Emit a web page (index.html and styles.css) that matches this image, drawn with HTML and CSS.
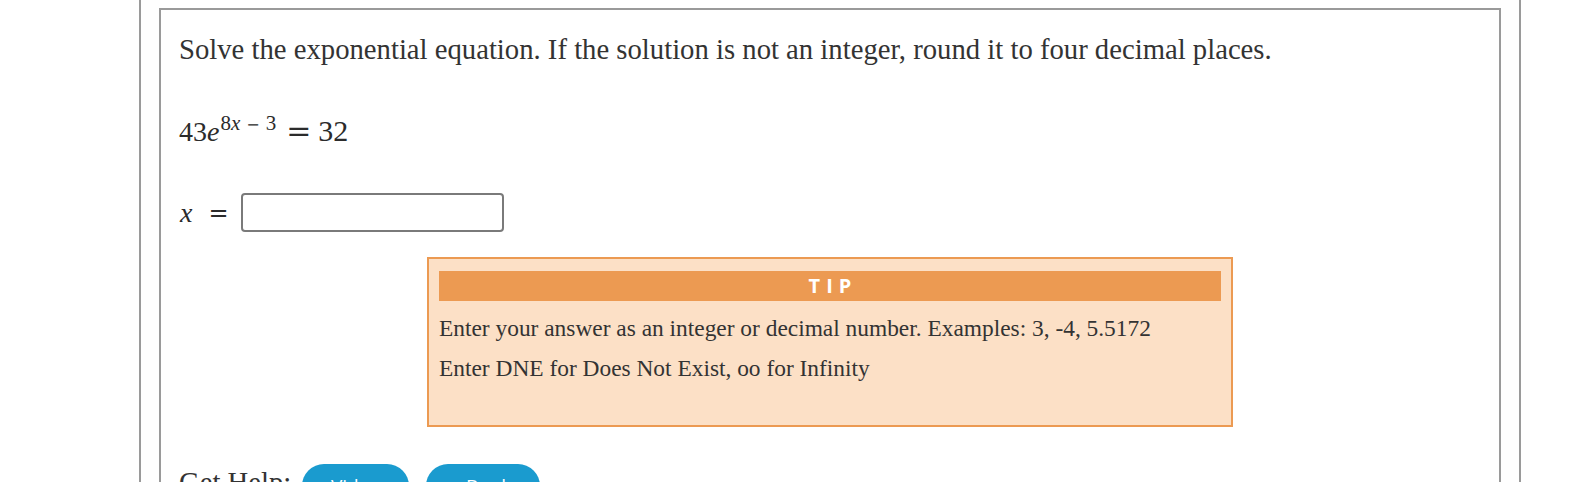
FILE: index.html
```html
<!DOCTYPE html>
<html>
<head>
<meta charset="utf-8">
<link rel="stylesheet" href="styles.css">
</head>
<body>
<div class="outer">
  <div class="question">
    <p class="prompt">Solve the exponential equation. If the solution is not an integer, round it to four decimal places.</p>
    <div class="equation"><span class="num">43</span><span class="var">e</span><span class="exp"><span class="num">8</span><span class="var">x</span><span class="op">−</span><span class="num">3</span></span><span class="rel">=</span><span class="num">32</span></div>
    <div class="answer-row">
      <span class="var">x</span><span class="rel">=</span>
      <input class="answer" type="text">
    </div>
    <div class="tip">
      <div class="tip-head">TIP</div>
      <p class="tip-line">Enter your answer as an integer or decimal number. Examples: 3, -4, 5.5172</p>
      <p class="tip-line">Enter DNE for Does Not Exist, oo for Infinity</p>
    </div>
    <div class="help-row">
      <span class="help-label">Get Help:</span>
      <span class="btn btn-video">Video</span>
      <span class="btn btn-book">eBook</span>
    </div>
  </div>
</div>
</body>
</html>
```

FILE: styles.css
```css
html, body {
  margin: 0;
  padding: 0;
  background: #ffffff;
  overflow: hidden;
}
body {
  font-family: "Liberation Serif", "Times New Roman", serif;
  color: #333333;
}
.outer {
  margin-left: 139px;
  width: 1378px;
  height: 482px;
  border-left: 2px solid #9a9a9a;
  border-right: 2px solid #9a9a9a;
  padding-top: 8px;
}
.question {
  margin-left: 18px;
  width: 1302px;
  height: 600px;
  border: 2px solid #9a9a9a;
  border-bottom: none;
  padding: 22px 18px 0 18px;
}
.prompt {
  margin: 0;
  font-size: 28.7px;
  line-height: 34px;
  white-space: nowrap;
}
.equation {
  margin-top: 45px;
  font-size: 28px;
  line-height: 40px;
  height: 40px;
  display: flex;
  align-items: baseline;
  color: #2b2b2b;
}
.var {
  font-style: italic;
}
.exp {
  font-size: 21px;
  position: relative;
  top: -11px;
  margin-left: 1px;
  display: inline-flex;
  align-items: baseline;
}
.exp .op {
  font-family: "DejaVu Serif", serif;
  font-size: 16px;
  margin: 0 6px;
}
.equation .rel {
  font-family: "DejaVu Serif", serif;
  font-size: 30px;
  margin: 0 7px 0 10px;
}
.equation > .num:last-child {
  font-size: 30px;
}
.answer-row {
  margin-top: 42px;
  display: flex;
  align-items: center;
  font-size: 28px;
  height: 39px;
  color: #2b2b2b;
}
.answer-row .var {
  margin-left: 1px;
}
.answer-row .rel {
  font-family: "DejaVu Serif", serif;
  font-size: 24px;
  margin: 0 12px 0 16px;
}
.answer {
  width: 263px;
  height: 39px;
  box-sizing: border-box;
  margin: 0;
  padding: 0;
  border: 2px solid #7a7a7a;
  border-radius: 4px;
  background: #ffffff;
}
.tip {
  margin-top: 25px;
  margin-left: 248px;
  width: 782px;
  padding: 12px 10px 37px 10px;
  background: #fce0c6;
  border: 2px solid #ec9a52;
}
.tip-head {
  height: 30px;
  line-height: 30px;
  background: #ec9a52;
  color: #ffffff;
  text-align: center;
  font-family: "Open Sans", "Liberation Sans", sans-serif;
  font-weight: 700;
  font-size: 20px;
  letter-spacing: 6px;
  padding-left: 6px;
}
.tip-line {
  margin: 0;
  font-size: 23.4px;
  line-height: 40px;
  white-space: nowrap;
}
.tip-line:first-of-type {
  margin-top: 7px;
}
.help-row {
  margin-top: 37px;
  display: flex;
  align-items: flex-start;
  height: 44px;
}
.help-label {
  font-size: 28.7px;
  line-height: 44px;
  margin-top: -4px;
  margin-right: 11px;
}
.btn {
  display: inline-flex;
  align-items: center;
  justify-content: center;
  height: 44px;
  border-radius: 22px;
  background: #1a9bcf;
  color: #ffffff;
  font-family: "Open Sans", "Liberation Sans", sans-serif;
  font-size: 19px;
  padding-top: 0;
  box-sizing: border-box;
}
.btn-video {
  width: 107px;
}
.btn-book {
  width: 114px;
  margin-left: 17px;
}
```
